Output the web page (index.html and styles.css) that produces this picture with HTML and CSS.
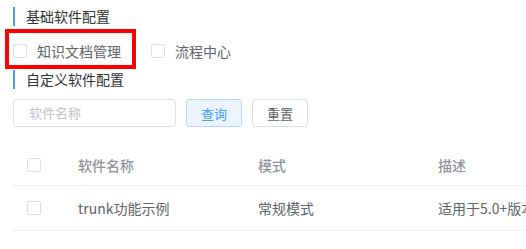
FILE: index.html
```html
<!DOCTYPE html>
<html>
<head>
<meta charset="utf-8">
<link rel="stylesheet" href="styles.css">
</head>
<body>
<div class="page">
  <div class="section-title first">基础软件配置</div>
  <div class="check-group">
    <label class="check-item"><span class="box"></span><span class="label">知识文档管理</span></label>
    <label class="check-item"><span class="box"></span><span class="label">流程中心</span></label>
    <div class="highlight"></div>
  </div>
  <div class="section-title">自定义软件配置</div>
  <div class="search">
    <div class="input">软件名称</div>
    <button class="btn primary">查询</button>
    <button class="btn">重置</button>
  </div>
  <div class="table">
    <div class="row head">
      <div class="cell sel"><span class="box"></span></div>
      <div class="cell">软件名称</div>
      <div class="cell">模式</div>
      <div class="cell">描述</div>
    </div>
    <div class="row">
      <div class="cell sel"><span class="box"></span></div>
      <div class="cell">trunk功能示例</div>
      <div class="cell">常规模式</div>
      <div class="cell">适用于5.0+版本的功能示例</div>
    </div>
  </div>
</div>
</body>
</html>
```
FILE: styles.css
```css
* { box-sizing: border-box; }
html, body { margin: 0; padding: 0; background: #fff; overflow: hidden; }
body {
  font-family: "Noto Sans CJK SC", "Noto Sans", sans-serif;
  font-size: 14px;
  color: #606266;
  width: 526px;
  height: 249px;
}
.page { padding: 7px 0 0 13px; }
.section-title {
  border-left: 2px solid #409eff;
  padding-left: 11px;
  height: 19px;
  line-height: 19px;
  color: #303133;
  font-size: 14px;
}
.check-group {
  position: relative;
  display: flex;
  align-items: center;
  height: 44px;
  padding-top: 5px;
}
.check-item {
  display: flex;
  align-items: center;
  margin-right: 30px;
}
.check-item .label { margin-left: 10px; line-height: 14px; }
.box {
  display: inline-block;
  width: 14px;
  height: 14px;
  border: 1px solid #dcdfe6;
  border-radius: 2px;
  background: #fff;
}
.highlight {
  position: absolute;
  left: -8px;
  top: 3px;
  width: 131px;
  height: 40px;
  border: 4px solid #ff0000;
}
.search {
  display: flex;
  margin-top: 10px;
  height: 28px;
}
.input {
  width: 163px;
  height: 28px;
  border: 1px solid #dcdfe6;
  border-radius: 4px;
  color: #c0c4cc;
  font-size: 13px;
  line-height: 26px;
  padding-left: 15px;
}
.btn {
  font-family: inherit;
  width: 56px;
  height: 28px;
  border: 1px solid #dcdfe6;
  border-radius: 3px;
  background: #fff;
  color: #606266;
  font-size: 13px;
  margin-left: 10px;
  padding: 0;
}
.btn.primary {
  background: #ecf5ff;
  border-color: #b3d8ff;
  color: #409eff;
}
.table { margin-top: 14px; }
.row {
  display: grid;
  grid-template-columns: 65px 180px 180px 1fr;
  height: 45px;
  border-bottom: 1px solid #ebeef5;
  align-items: center;
}
.row.head {
  color: #909399;
  font-weight: 500;
  padding-top: 4px;
}
.cell { white-space: nowrap; overflow: hidden; }
.cell.sel { padding-left: 14px; display: flex; align-items: center; }
```
